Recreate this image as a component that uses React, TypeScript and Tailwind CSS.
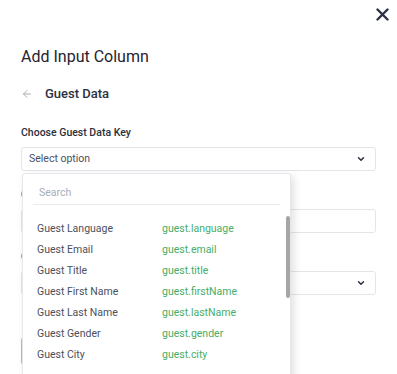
import { ArrowLeft, ChevronDown } from 'lucide-react';

const guestKeys = [
  { label: 'Guest Language', value: 'guest.language' },
  { label: 'Guest Email', value: 'guest.email' },
  { label: 'Guest Title', value: 'guest.title' },
  { label: 'Guest First Name', value: 'guest.firstName' },
  { label: 'Guest Last Name', value: 'guest.lastName' },
  { label: 'Guest Gender', value: 'guest.gender' },
  { label: 'Guest City', value: 'guest.city' },
];

function SelectBox({ text }: { text?: string }) {
  return (
    <div className="h-[24px] border border-[#e3e5e9] rounded-[3px] flex items-center justify-between pl-[7px] pr-[9px] bg-white">
      <span className="text-[10.5px] text-[#4b5060]">{text}</span>
      <ChevronDown size={10} strokeWidth={3.5} className="text-[#2a2f3d]" />
    </div>
  );
}

export default function App() {
  return (
    <div
      className="w-[397px] h-[374px] overflow-hidden bg-white relative"
      style={{ fontFamily: 'Roboto, "Noto Sans", sans-serif' }}
    >
      <div className="flex justify-end pt-[8px] pr-[8px]">
        <svg width="13" height="13" viewBox="0 0 13 13" className="block">
          <path d="M1.5 1.5 L11.5 11.5 M11.5 1.5 L1.5 11.5" stroke="#2b3146" strokeWidth="2.4" strokeLinecap="round" />
        </svg>
      </div>

      <div className="px-[21px]">
        <h1 className="mt-[26px] text-[16px] leading-[20px] text-[#1f2330]">Add Input Column</h1>

        <div className="mt-[17px] flex items-center h-[20px]">
          <ArrowLeft size={12} strokeWidth={2} className="text-[#a9adb5]" />
          <span className="ml-[12px] text-[13px] font-medium text-[#2c3140]">Guest Data</span>
        </div>

        <div className="mt-[22px] text-[10.5px] leading-[14px] font-medium text-[#2a2f3c]">Choose Guest Data Key</div>

        <div className="relative mt-[7px]">
          <SelectBox text="Select option" />

          <div className="absolute left-[1px] top-[26px] w-[269px] h-[240px] bg-white border border-[#e6e7ea] rounded-[3px] shadow-[3px_3px_8px_rgba(0,0,0,0.12)] z-10 overflow-hidden">
            <div className="mx-[10px] mt-[7px] h-[24px] border-b border-[#e9eaed] flex items-center pl-[6px]">
              <span className="text-[10.5px] text-[#a8adb8]">Search</span>
            </div>
            <div className="relative mt-[13px]">
              <div className="absolute right-[0px] -top-[2px] w-[4px] h-[82px] rounded-full bg-[#a6a6a6]" />
              {guestKeys.map((k) => (
                <div key={k.value} className="h-[21px] flex items-center pl-[14px] text-[10.5px]">
                  <span className="w-[125px] text-[#4b505c]">{k.label}</span>
                  <span className="text-[#46ad68]">{k.value}</span>
                </div>
              ))}
            </div>
          </div>
        </div>

        <div className="mt-[17px] text-[10.5px] leading-[14px] font-medium text-[#2a2f3c]">Column Name</div>
        <div className="mt-[7px] h-[24px] border border-[#e3e5e9] rounded-[3px]" />

        <div className="mt-[17px] text-[10.5px] leading-[14px] font-medium text-[#2a2f3c]">Column Type</div>
        <div className="mt-[7px]">
          <SelectBox />
        </div>

        <div className="mt-[42px] h-[28px] w-[80px] border border-[#b5b8c8] rounded-[3px]" />
      </div>
    </div>
  );
}
